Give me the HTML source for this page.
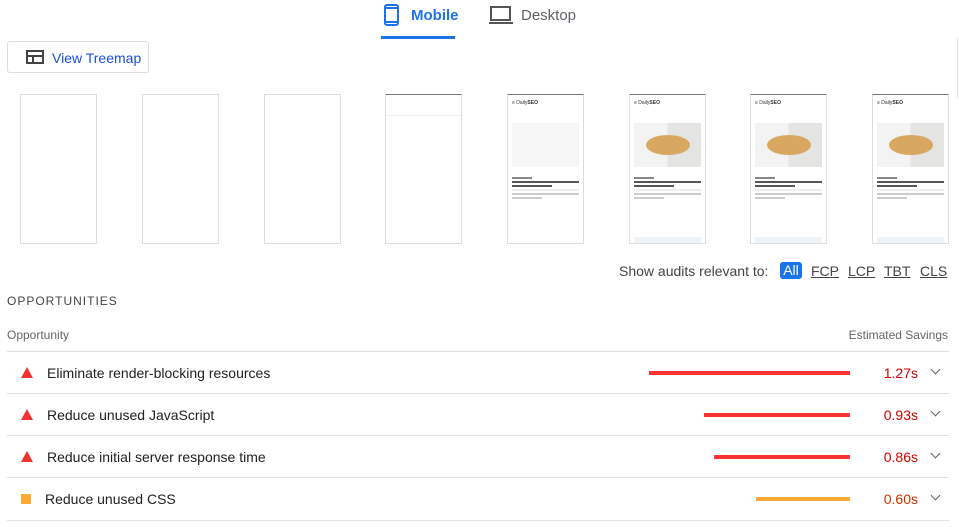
<!DOCTYPE html>
<html><head><style>
body{margin:0;width:959px;height:527px;background:#fff;font-family:"Liberation Sans",Arial,sans-serif;position:relative;overflow:hidden}
.a{position:absolute}
.fr{position:absolute;top:94px;width:75px;height:148px;border:1px solid #ddd;background:#fff;overflow:hidden}
.fr.d{border-top:1px solid #777}
.row{position:absolute;left:7px;width:942px;height:42px;border-top:1px solid #e0e0e0;font-size:14px;color:#212121}
.row .t{position:absolute;left:40px;top:13px}
.row .bar{position:absolute;top:19px;height:4px}
.row .v{position:absolute;right:31px;top:13px;color:#c00}
.row .ch{position:absolute;right:10px;top:14px;width:6px;height:6px;border-right:1.5px solid #666;border-bottom:1.5px solid #666;transform:rotate(45deg)}
.tri{position:absolute;left:14px;top:15px;width:0;height:0;border-left:6px solid transparent;border-right:6px solid transparent;border-bottom:11px solid #e33}
.ln{height:2px;background:#ccc;margin:2px 4px}
.ln.k{background:#555;height:2px}
</style></head><body>
<svg class="a" style="left:384px;top:4px" width="16" height="22"><rect x="1" y="1" width="13" height="20" rx="2" fill="none" stroke="#1a73e8" stroke-width="2"/><line x1="1" y1="4" x2="14" y2="4" stroke="#1a73e8" stroke-width="2"/><line x1="1" y1="18" x2="14" y2="18" stroke="#1a73e8" stroke-width="2"/></svg>
<div class="a" style="left:411px;top:7px;font-size:15px;color:#1a73e8;font-weight:bold">Mobile</div>
<div class="a" style="left:381px;top:36px;width:74px;height:3px;background:#1a73e8"></div>
<svg class="a" style="left:489px;top:6px" width="24" height="18"><rect x="2" y="1" width="19" height="13" fill="none" stroke="#555" stroke-width="2"/><line x1="0" y1="17" x2="24" y2="17" stroke="#555" stroke-width="2"/></svg>
<div class="a" style="left:521px;top:7px;font-size:15px;color:#5f6368">Desktop</div>
<div class="a" style="left:957px;top:38px;width:1px;height:60px;background:#ddd"></div>
<div class="a" style="left:7px;top:41px;width:140px;height:30px;border:1px solid #ddd;border-radius:3px"></div>
<svg class="a" style="left:26px;top:50px" width="18" height="14"><rect x="1" y="1" width="16" height="12" fill="none" stroke="#444" stroke-width="2"/><line x1="1" y1="6" x2="17" y2="6" stroke="#444" stroke-width="2"/><line x1="7" y1="6" x2="7" y2="13" stroke="#444" stroke-width="2"/></svg>
<div class="a" style="left:52px;top:50px;font-size:14px;color:#1a4fd8">View Treemap</div>
<div class="fr" style="left:20px"></div>
<div class="fr" style="left:142px"></div>
<div class="fr" style="left:264px"></div>
<div class="fr d" style="left:385px"><div style="height:20px;border-bottom:1px solid #f0f0f0"></div></div>
<div class="fr d" style="left:507px"><div style="font-size:5px;color:#333;padding:5px 4px">≡ Daily<b>SEO</b></div><div style="margin:12px 4px 10px;height:44px;background:#f6f6f6"></div><div class="ln" style="width:20px;background:#888"></div><div class="ln k"></div><div class="ln k" style="width:40px"></div><div class="ln" style="background:#eee"></div><div class="ln"></div><div class="ln" style="width:30px"></div></div>
<div class="fr d" style="left:629px"><div style="font-size:5px;color:#333;padding:5px 4px">≡ Daily<b>SEO</b></div><div style="margin:12px 4px 10px;height:44px;background:linear-gradient(90deg,#f3f3f3 50%,#e4e4e2 50%);position:relative"><div style="position:absolute;left:12px;top:12px;width:44px;height:20px;border-radius:50%;background:#d8a860"></div></div><div class="ln" style="width:20px;background:#888"></div><div class="ln k"></div><div class="ln k" style="width:40px"></div><div class="ln" style="background:#eee"></div><div class="ln"></div><div class="ln" style="width:30px"></div><div style="position:absolute;bottom:0;left:4px;right:4px;height:6px;background:#eef4fb"></div></div>
<div class="fr d" style="left:750px"><div style="font-size:5px;color:#333;padding:5px 4px">≡ Daily<b>SEO</b></div><div style="margin:12px 4px 10px;height:44px;background:linear-gradient(90deg,#f3f3f3 50%,#e4e4e2 50%);position:relative"><div style="position:absolute;left:12px;top:12px;width:44px;height:20px;border-radius:50%;background:#d8a860"></div></div><div class="ln" style="width:20px;background:#888"></div><div class="ln k"></div><div class="ln k" style="width:40px"></div><div class="ln" style="background:#eee"></div><div class="ln"></div><div class="ln" style="width:30px"></div><div style="position:absolute;bottom:0;left:4px;right:4px;height:6px;background:#eef4fb"></div></div>
<div class="fr d" style="left:872px"><div style="font-size:5px;color:#333;padding:5px 4px">≡ Daily<b>SEO</b></div><div style="margin:12px 4px 10px;height:44px;background:linear-gradient(90deg,#f3f3f3 50%,#e4e4e2 50%);position:relative"><div style="position:absolute;left:12px;top:12px;width:44px;height:20px;border-radius:50%;background:#d8a860"></div></div><div class="ln" style="width:20px;background:#888"></div><div class="ln k"></div><div class="ln k" style="width:40px"></div><div class="ln" style="background:#eee"></div><div class="ln"></div><div class="ln" style="width:30px"></div><div style="position:absolute;bottom:0;left:4px;right:4px;height:6px;background:#eef4fb"></div></div>
<div class="a" style="left:619px;top:263px;font-size:14px;color:#444">Show audits relevant to:</div>
<div class="a" style="left:780px;top:262px;width:22px;height:17px;background:#1a73e8;border-radius:3px;color:#fff;font-size:14px;text-align:center;line-height:17px">All</div>
<div class="a" style="left:811px;top:263px;font-size:14px;color:#444;text-decoration:underline">FCP</div>
<div class="a" style="left:848px;top:263px;font-size:14px;color:#444;text-decoration:underline">LCP</div>
<div class="a" style="left:884px;top:263px;font-size:14px;color:#444;text-decoration:underline">TBT</div>
<div class="a" style="left:920px;top:263px;font-size:14px;color:#444;text-decoration:underline">CLS</div>
<div class="a" style="left:7px;top:294px;font-size:12px;color:#444;letter-spacing:1px">OPPORTUNITIES</div>
<div class="a" style="left:7px;top:328px;font-size:12px;color:#666">Opportunity</div>
<div class="a" style="right:11px;top:328px;font-size:12px;color:#666">Estimated Savings</div>
<div class="row" style="top:351px"><div class="tri"></div><div class="t">Eliminate render-blocking resources</div><div class="bar" style="left:642px;width:201px;background:#f33"></div><div class="v">1.27s</div><div class="ch"></div></div>
<div class="row" style="top:393px"><div class="tri"></div><div class="t">Reduce unused JavaScript</div><div class="bar" style="left:697px;width:146px;background:#f33"></div><div class="v">0.93s</div><div class="ch"></div></div>
<div class="row" style="top:435px"><div class="tri"></div><div class="t">Reduce initial server response time</div><div class="bar" style="left:707px;width:136px;background:#f33"></div><div class="v">0.86s</div><div class="ch"></div></div>
<div class="row" style="top:477px;border-bottom:1px solid #e0e0e0"><div style="position:absolute;left:14px;top:16px;width:10px;height:10px;background:#fa3"></div><div class="t" style="left:38px">Reduce unused CSS</div><div class="bar" style="left:749px;width:94px;background:#fa3"></div><div class="v" style="color:#c33300">0.60s</div><div class="ch"></div></div>
</body></html>
